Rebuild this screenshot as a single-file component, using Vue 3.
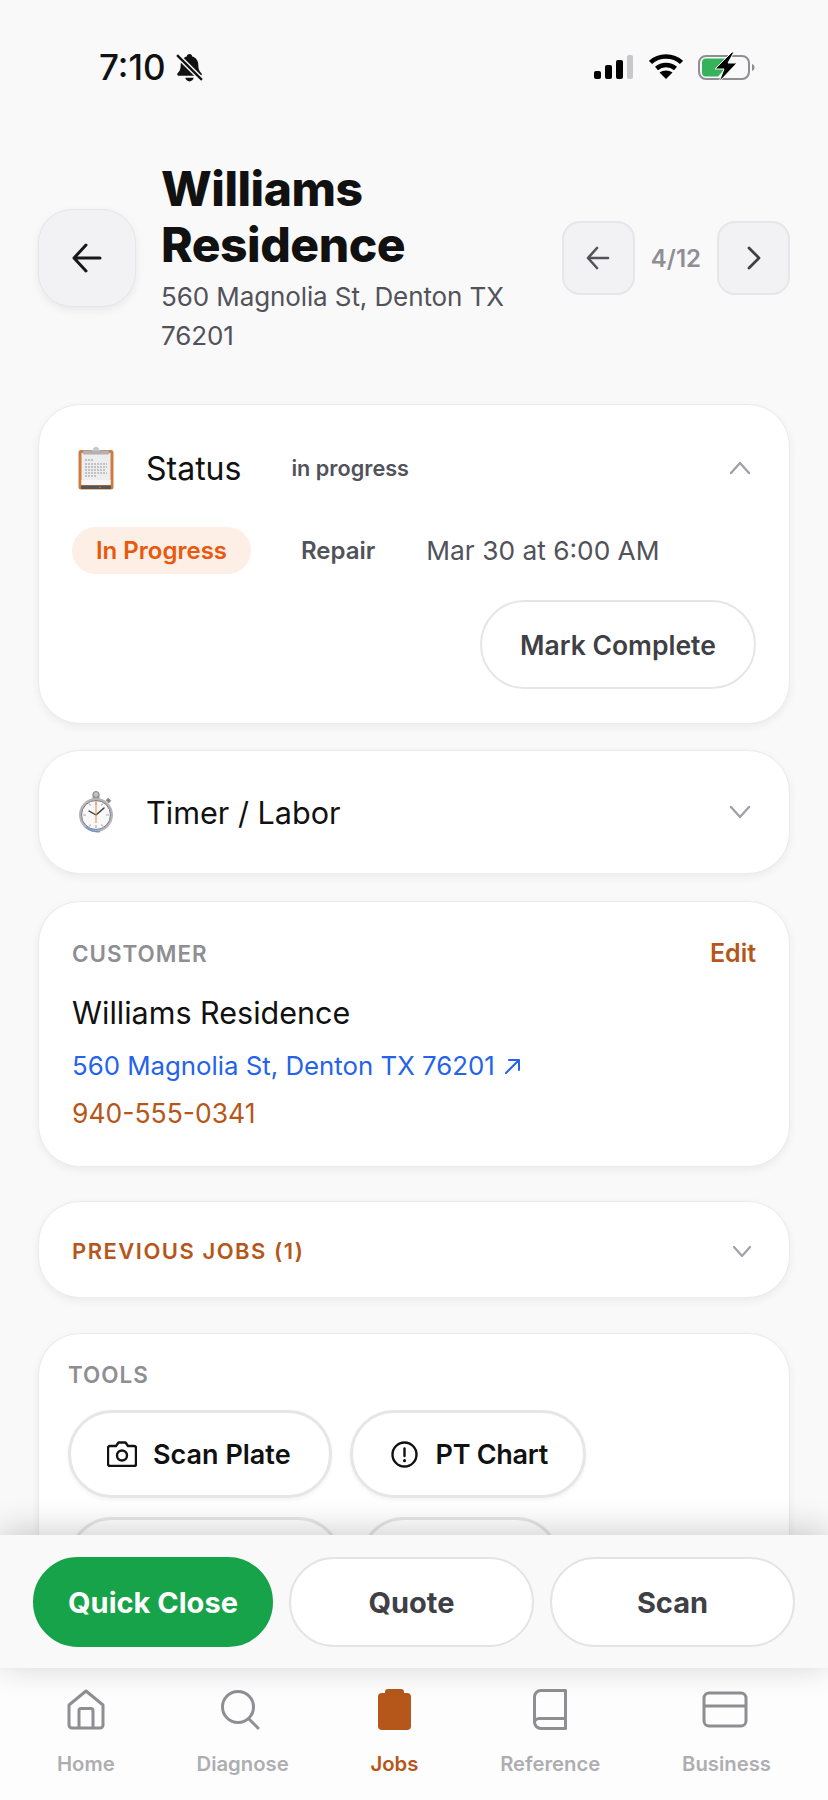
<template>
  <div class="app">
    <div class="statusbar">
      <div class="status-left">
        <span class="time">7:10</span>
        <svg class="bell" width="27" height="29" viewBox="0 0 26 28">
          <path d="M13 1c1.600 0 2.500 1 2.700 2.300 3.800 1.100 5.800 4.300 5.800 8.200 0 4 1 6.300 3 8 .8.800.3 2.500-1 2.500H2.500c-1.300 0-1.800-1.700-1-2.500 2-1.700 3-4 3-8 0-3.900 2-7.100 5.800-8.200C10.500 2 11.400 1 13 1z" fill="#111" />
          <path d="M9 24h8c-.3 2-2 3.500-4 3.500S9.300 26 9 24z" fill="#111" />
          <path d="M1 2l24 24" stroke="#f9f9f9" stroke-width="5" />
          <path d="M1 2l24 24" stroke="#111" stroke-width="2.200" />
        </svg>
      </div>
      <div class="status-right">
        <svg width="40" height="26" viewBox="0 0 40 26">
          <rect x="0" y="17" width="7" height="8" rx="2" fill="#000" />
          <rect x="11" y="11" width="7" height="14" rx="2" fill="#000" />
          <rect x="22" y="6" width="7" height="19" rx="2" fill="#000" />
          <rect x="33" y="1" width="6" height="24" rx="2" fill="#c8c8ca" />
        </svg>
        <svg width="34" height="26" viewBox="0 0 34 26">
          <path d="M1.500 8.500C9.800.500 24.200.500 32.500 8.500" fill="none" stroke="#000" stroke-width="4.500" />
          <path d="M7.500 14.500c5.400-4.800 13.600-4.800 19 0" fill="none" stroke="#000" stroke-width="4.500" />
          <path d="M17 25l-6.500-6.500c3.600-2.800 9.400-2.800 13 0z" fill="#000" />
        </svg>
        <svg width="57" height="30" viewBox="0 0 57 30">
          <rect x="1" y="4" width="50" height="23" rx="7" fill="none" stroke="#8e8e93" stroke-width="2" />
          <path d="M54 12c1.500.5 2.500 1.800 2.500 3.500S55.500 18.500 54 19z" fill="#8e8e93" />
          <path d="M8 6.500h21l-6 9h5l-8 9H8a4 4 0 0 1-4-4v-10a4 4 0 0 1 4-4z" fill="#34b35a" />
          <path d="M34 0L17 17h9l-5 13 18-19h-9l6-11z" fill="#000" stroke="#f9f9f9" stroke-width="1" />
        </svg>
      </div>
    </div>

    <header class="page-head">
      <button class="back-btn" aria-label="Back">
        <svg width="30" height="30" viewBox="0 0 30 30" fill="none" stroke="#18181b" stroke-width="3" stroke-linecap="round" stroke-linejoin="round">
          <path d="M28 15H2M14 2L2 15l12 13" />
        </svg>
      </button>
      <div class="head-text">
        <h1>Williams Residence</h1>
        <p>560 Magnolia St, Denton TX 76201</p>
      </div>
      <div class="pager">
        <button class="pager-btn" aria-label="Previous">
          <svg width="24" height="24" viewBox="0 0 24 24" fill="none" stroke="#52525b" stroke-width="2.600" stroke-linecap="round" stroke-linejoin="round">
            <path d="M22 12H2M11 2L2 12l9 10" />
          </svg>
        </button>
        <span class="pager-count">4/12</span>
        <button class="pager-btn" aria-label="Next">
          <svg width="14" height="24" viewBox="0 0 14 24" fill="none" stroke="#3f3f46" stroke-width="2.800" stroke-linecap="round" stroke-linejoin="round">
            <path d="M2 2l10 10L2 22" />
          </svg>
        </button>
      </div>
    </header>

    <main class="content">
      <section class="card status-card">
        <div class="row">
          <svg class="emoji" width="36" height="44" viewBox="0 0 36 44">
            <rect x="0.500" y="4" width="35" height="39.500" rx="2.500" fill="#cf7a40" />
            <rect x="3.500" y="7" width="29" height="32" fill="#ededee" />
            <path d="M7 14h8M7 18h22M7 21h22M7 24h20M7 27h22M7 30h12" stroke="#c2c2c4" stroke-width="1.800" stroke-dasharray="2 1" />
            <rect x="3.500" y="34" width="29" height="5" fill="#f8f8f8" />
            <rect x="3" y="39.500" width="30" height="3.500" fill="#555" />
            <circle cx="22" cy="41.200" r="0.800" fill="#e8742c" />
            <rect x="5" y="4.500" width="26" height="4" rx="1" fill="#b2b2b5" />
            <path d="M14 5l2-3.500q2-1.500 4 0L22 5z" fill="#c8c8ca" />
          </svg>
          <span class="row-title title-status">Status</span>
          <span class="status-note">in progress</span>
          <svg class="chevron" width="22" height="14" viewBox="0 0 22 14" fill="none" stroke="#a1a1aa" stroke-width="2.400" stroke-linecap="round" stroke-linejoin="round">
            <path d="M2 12l9-10 9 10" />
          </svg>
        </div>
        <div class="status-meta">
          <span class="status-pill">In Progress</span>
          <span class="job-type">Repair</span>
          <span class="job-date">Mar 30 at 6:00 AM</span>
        </div>
        <div class="status-action">
          <button class="outline-btn mark-btn">Mark Complete</button>
        </div>
      </section>

      <section class="card timer-card">
        <div class="row">
          <svg class="emoji" width="36" height="42" viewBox="0 0 36 42">
            <rect x="14.500" y="3" width="7" height="5" fill="#9a9a9f" />
            <circle cx="18" cy="3.500" r="3" fill="#c0c0c4" stroke="#85858a" />
            <path d="M29 8l3 3" stroke="#85858a" stroke-width="3.500" />
            <circle cx="18" cy="24" r="17" fill="#b4b4b9" />
            <circle cx="18" cy="24" r="14.500" fill="#f8f8f8" stroke="#7a7b82" stroke-width="1" />
            <path d="M18 11v3M18 34v3M5 24h3M28 24h3M11.500 12.700l1 1.800M24.500 12.700l-1 1.800M11.500 35.300l1-1.800M24.500 35.300l-1-1.800" stroke="#a8a8ac" stroke-width="1.200" />
            <path d="M18 24l-7-4M18 24l8-7" stroke="#333" stroke-width="1.400" stroke-linecap="round" />
            <path d="M18 10v22" stroke="#ee9a5a" stroke-width="1.200" />
            <path d="M8 36a17 17 0 0 0 14 4.500" fill="none" stroke="#6d94d8" stroke-width="1.500" />
          </svg>
          <span class="row-title">Timer / Labor</span>
          <svg class="chevron" width="22" height="14" viewBox="0 0 22 14" fill="none" stroke="#a1a1aa" stroke-width="2.400" stroke-linecap="round" stroke-linejoin="round">
            <path d="M2 2l9 10 9-10" />
          </svg>
        </div>
      </section>

      <section class="card customer-card">
        <div class="customer-top">
          <span class="section-label">CUSTOMER</span>
          <span class="edit-link">Edit</span>
        </div>
        <div class="customer-name">Williams Residence</div>
        <div class="customer-address">
          560 Magnolia St, Denton TX 76201
          <svg width="17" height="17" viewBox="0 0 17 17" fill="none" stroke="#2563eb" stroke-width="2" stroke-linecap="round" stroke-linejoin="round">
            <path d="M2 15L15 2M5 2h10v10" />
          </svg>
        </div>
        <div class="customer-phone">940-555-0341</div>
      </section>

      <section class="card previous-card">
        <span class="previous-label">PREVIOUS JOBS (1)</span>
        <svg width="20" height="12" viewBox="0 0 20 12" fill="none" stroke="#a1a1aa" stroke-width="2.200" stroke-linecap="round" stroke-linejoin="round">
          <path d="M2 2l8 9 8-9" />
        </svg>
      </section>

      <section class="card tools-card">
        <div class="section-label">TOOLS</div>
        <div class="tool-grid">
          <button class="tool-chip">
            <svg width="30" height="26" viewBox="0 0 30 26" fill="none" stroke="#111" stroke-width="2.400" stroke-linejoin="round">
              <path d="M3 5h6l2.500-3.500h7L21 5h6a2 2 0 0 1 2 2v16a2 2 0 0 1-2 2H3a2 2 0 0 1-2-2V7a2 2 0 0 1 2-2z" />
              <circle cx="15" cy="14.500" r="5" />
            </svg>
            Scan Plate
          </button>
          <button class="tool-chip chip-pt">
            <svg width="27" height="27" viewBox="0 0 27 27" fill="none" stroke="#111" stroke-width="2.400" stroke-linecap="round">
              <circle cx="13.500" cy="13.500" r="12" />
              <path d="M13.500 7.500v7.500" />
              <path d="M13.500 19.500v.2" stroke-width="3" />
            </svg>
            PT Chart
          </button>
          <button class="tool-chip chip-cut-a"></button>
          <button class="tool-chip chip-cut-b"></button>
        </div>
      </section>
    </main>

    <div class="action-bar">
      <button class="action-btn action-primary">Quick Close</button>
      <button class="action-btn">Quote</button>
      <button class="action-btn">Scan</button>
    </div>

    <nav class="tabbar">
      <div class="tab">
        <svg width="38" height="41" viewBox="0 0 38 41" fill="none" stroke="#8e8e93" stroke-width="3" stroke-linejoin="round">
          <path d="M19 2l17 14v20a3 3 0 0 1-3 3H5a3 3 0 0 1-3-3V16z" />
          <path d="M12 39V21.500a2 2 0 0 1 2-2h10a2 2 0 0 1 2 2V39" />
        </svg>
        <span>Home</span>
      </div>
      <div class="tab">
        <svg class="icon-search" width="42" height="41" viewBox="0 0 42 41" fill="none" stroke="#8e8e93" stroke-width="3" stroke-linecap="round">
          <circle cx="19" cy="18" r="15.500" />
          <path d="M30 30l9 9" />
        </svg>
        <span>Diagnose</span>
      </div>
      <div class="tab tab-active">
        <svg width="33" height="41" viewBox="0 0 33 41" fill="#b5571a">
          <rect x="7" y="0" width="19" height="10" rx="3" />
          <rect x="0" y="4" width="33" height="37" rx="4" />
        </svg>
        <span>Jobs</span>
      </div>
      <div class="tab">
        <svg width="34" height="41" viewBox="0 0 34 41" fill="none" stroke="#8e8e93" stroke-width="3" stroke-linejoin="round">
          <path d="M32.500 1.500H8A6.500 6.500 0 0 0 1.500 8v25A6.500 6.500 0 0 0 8 39.500h24.500z" />
          <path d="M1.500 33.500A4.500 4.500 0 0 1 6 29.500h26.500" />
        </svg>
        <span>Reference</span>
      </div>
      <div class="tab">
        <svg class="icon-card" width="46" height="41" viewBox="0 0 46 41" fill="none" stroke="#8e8e93" stroke-width="3">
          <rect x="2" y="4" width="42" height="33" rx="5" />
          <path d="M2 17h42" />
        </svg>
        <span>Business</span>
      </div>
    </nav>
  </div>
</template>

<script setup>
</script>

<style>
html,
body {
  margin: 0;
  background: #f9f9f9;
}
</style>

<style scoped>
.app {
  width: 828px;
  height: 1800px;
  display: flex;
  flex-direction: column;
  overflow: hidden;
  background: #f9f9f9;
  font-family: "Inter", "Liberation Sans", sans-serif;
  color: #111;
}

button {
  font-family: inherit;
  padding: 0;
  cursor: pointer;
}

.statusbar {
  height: 161px;
  flex: none;
  box-sizing: border-box;
  padding: 52px 73px 0 99px;
  display: flex;
  justify-content: space-between;
  align-items: flex-start;
}

.status-left,
.status-right {
  display: flex;
  align-items: center;
  height: 30px;
}

.status-left {
  gap: 10px;
}

.status-right {
  gap: 15px;
}

.time {
  font-size: 35px;
  font-weight: 500;
  color: #111;
}

.page-head {
  flex: none;
  display: flex;
  align-items: center;
  padding: 0 38px;
  height: 194px;
}

.back-btn {
  flex: none;
  width: 98px;
  height: 98px;
  border-radius: 34px;
  background: #f2f2f4;
  border: 1px solid #e6e6e8;
  box-shadow: 0 3px 8px rgba(0, 0, 0, 0.07);
  display: flex;
  align-items: center;
  justify-content: center;
}

.head-text {
  flex: 1;
  min-width: 0;
  padding-left: 25px;
  padding-right: 18px;
}

h1 {
  margin: 0;
  font-size: 48px;
  line-height: 56px;
  font-weight: 800;
  letter-spacing: -0.5px;
  color: #111;
}

.head-text p {
  margin: 4px 0 0;
  font-size: 26px;
  line-height: 39px;
  letter-spacing: -0.1px;
  color: #52525b;
}

.pager {
  flex: none;
  display: flex;
  align-items: center;
  gap: 16px;
}

.pager-btn {
  width: 73px;
  height: 74px;
  border-radius: 18px;
  background: #f2f2f4;
  border: 2px solid #e6e6e8;
  display: flex;
  align-items: center;
  justify-content: center;
}

.pager-count {
  font-size: 24px;
  font-weight: 600;
  color: #8e8e93;
}

.content {
  flex: 1;
  min-height: 0;
  overflow: hidden;
  padding: 49px 38px 0;
}

.card {
  box-sizing: border-box;
  background: #fff;
  border: 1px solid #ebebec;
  border-radius: 42px;
  box-shadow: 0 3px 8px rgba(0, 0, 0, 0.06);
}

.row {
  display: flex;
  align-items: center;
}

.emoji {
  flex: none;
  margin-left: 6px;
}

.row-title {
  font-size: 30.600px;
  color: #111;
  margin-left: 32px;
}

.title-status {
  font-size: 32px;
}

.chevron {
  margin-left: auto;
  margin-right: 5px;
}

.status-card {
  height: 320px;
  padding: 41px 33px 0;
}

.status-note {
  margin-left: 50px;
  font-size: 21.700px;
  font-weight: 600;
  color: #52525b;
}

.status-meta {
  display: flex;
  align-items: center;
  margin-top: 37px;
}

.status-pill {
  width: 179px;
  height: 47px;
  border-radius: 24px;
  background: #fdeee6;
  color: #ea580c;
  font-size: 24px;
  font-weight: 600;
  display: flex;
  align-items: center;
  justify-content: center;
}

.job-type {
  margin-left: 50px;
  font-size: 24px;
  font-weight: 600;
  color: #52525b;
}

.job-date {
  margin-left: 51px;
  font-size: 26.300px;
  color: #52525b;
}

.status-action {
  display: flex;
  justify-content: flex-end;
  margin-top: 26px;
}

.outline-btn {
  background: #fff;
  border: 2px solid #e6e6e8;
  border-radius: 46px;
  color: #3f3f46;
  font-weight: 600;
}

.mark-btn {
  width: 276px;
  height: 89px;
  font-size: 26.500px;
}

.timer-card {
  margin-top: 26px;
  height: 124px;
  padding: 0 33px;
  display: flex;
  flex-direction: column;
  justify-content: center;
}

.customer-card {
  margin-top: 27px;
  height: 266px;
  padding: 38px 33px 0;
}

.customer-top {
  display: flex;
  justify-content: space-between;
  align-items: center;
  height: 28px;
}

.section-label {
  font-size: 22.400px;
  line-height: 28px;
  font-weight: 600;
  letter-spacing: 1px;
  color: #8e8e93;
}

.edit-link {
  font-size: 25px;
  line-height: 26px;
  margin-top: -2px;
  font-weight: 600;
  color: #b5571a;
}

.customer-name {
  margin-top: 27px;
  font-size: 30.500px;
  line-height: 36px;
  color: #111;
}

.customer-address {
  margin-top: 18px;
  font-size: 25.800px;
  line-height: 34px;
  color: #2563eb;
  display: flex;
  align-items: center;
  gap: 9px;
}

.customer-phone {
  margin-top: 13px;
  font-size: 26.500px;
  line-height: 34px;
  color: #b5571a;
}

.previous-card {
  margin-top: 34px;
  height: 97px;
  padding: 2px 37px 0 33px;
  display: flex;
  align-items: center;
  justify-content: space-between;
}

.previous-label {
  font-size: 22px;
  font-weight: 600;
  letter-spacing: 1.500px;
  color: #b5571a;
}

.tools-card {
  margin-top: 35px;
  height: 300px;
  padding: 27px 29px 0;
  border-bottom-left-radius: 0;
  border-bottom-right-radius: 0;
}

.tool-grid {
  display: flex;
  flex-wrap: wrap;
  gap: 19px 18px;
  margin-top: 21px;
}

.tool-chip {
  box-sizing: border-box;
  height: 88px;
  padding: 0 38px 0 36px;
  background: #fff;
  border: 3px solid #e6e6e8;
  border-radius: 44px;
  box-shadow: 0 2px 4px rgba(0, 0, 0, 0.05);
  display: flex;
  align-items: center;
  gap: 16px;
  font-size: 27px;
  font-weight: 600;
  color: #111;
}

.chip-pt {
  gap: 18px;
  padding: 0 35px 0 38px;
  letter-spacing: -0.3px;
}

.chip-cut-a {
  width: 274px;
}

.chip-cut-b {
  width: 200px;
}

.action-bar {
  flex: none;
  position: relative;
  z-index: 2;
  box-sizing: border-box;
  height: 133px;
  padding: 22px 33px 0;
  display: flex;
  gap: 16px;
  background: #f9f9f9;
  box-shadow: 0 -4px 32px rgba(0, 0, 0, 0.2);
}

.action-btn {
  flex: 1;
  height: 90px;
  border-radius: 46px;
  background: #fff;
  border: 2px solid #e4e4e6;
  font-size: 29px;
  font-weight: 700;
  color: #3f3f46;
}

.action-primary {
  flex: none;
  width: 240px;
  background: #16a34a;
  border-color: #16a34a;
  color: #fff;
}

.tabbar {
  flex: none;
  height: 132px;
  box-sizing: border-box;
  padding: 21px 57px 0 57px;
  display: flex;
  justify-content: space-between;
  background: #fdfdfd;
}

.tab {
  display: flex;
  flex-direction: column;
  align-items: center;
  font-size: 20.300px;
  font-weight: 600;
  color: #aeaeb2;
}

.tab span {
  margin-top: 22px;
  line-height: 24px;
}

.tab-active {
  color: #b5571a;
}

.icon-search {
  margin-left: -6px;
}

.icon-card {
  margin-left: -3px;
}
</style>
